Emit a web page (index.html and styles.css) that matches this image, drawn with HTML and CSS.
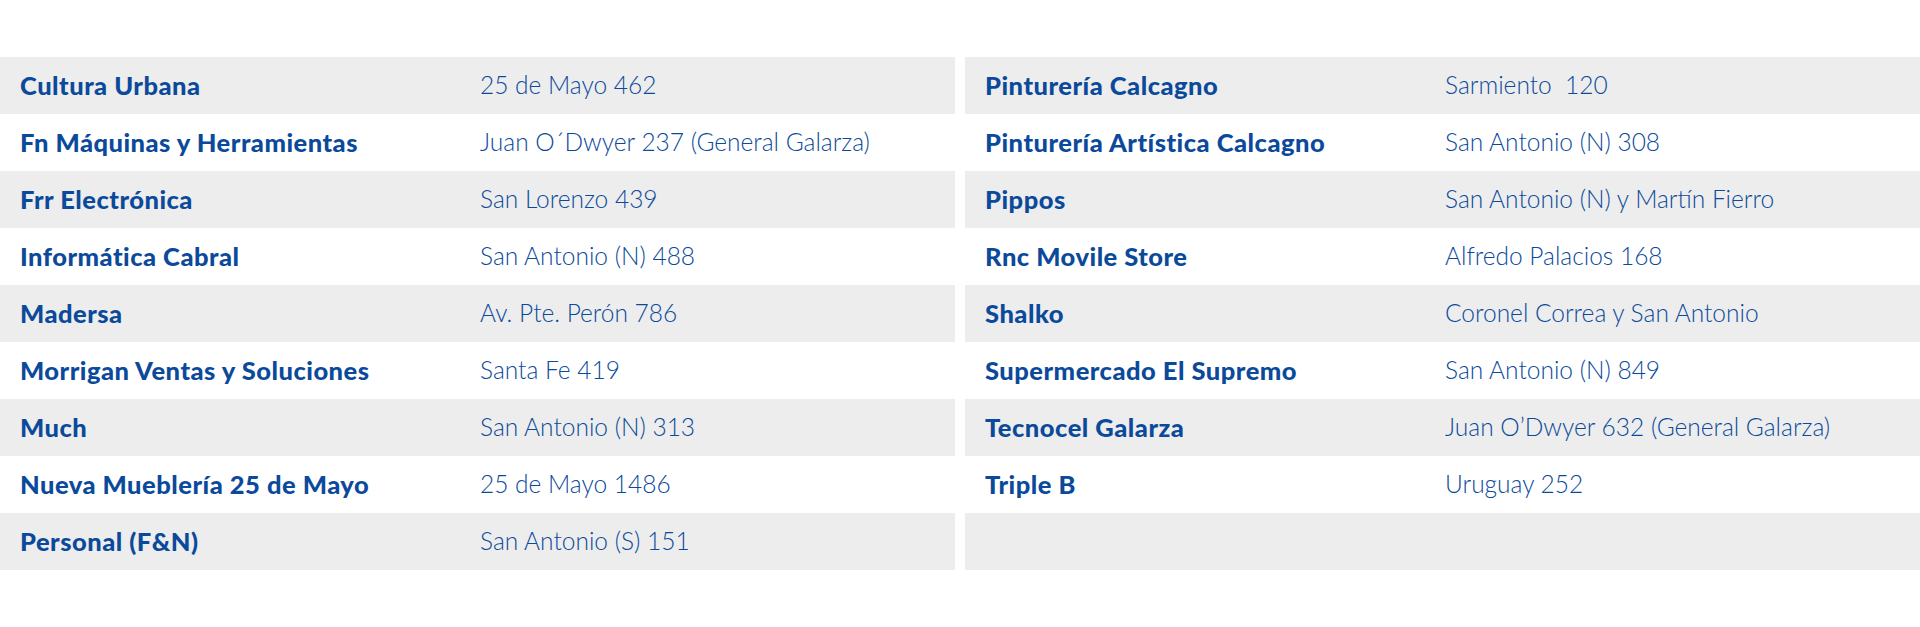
FILE: index.html
```html
<!DOCTYPE html>
<html lang="es">
<head>
<meta charset="utf-8">
<title>Comercios adheridos</title>
<link rel="stylesheet" href="styles.css">
</head>
<body>
<main class="lists">
  <div class="list">
    <div class="row"><span class="name">Cultura Urbana</span><span class="addr">25 de Mayo 462</span></div>
    <div class="row"><span class="name">Fn Máquinas y Herramientas</span><span class="addr">Juan O´Dwyer 237 (General Galarza)</span></div>
    <div class="row"><span class="name">Frr Electrónica</span><span class="addr">San Lorenzo 439</span></div>
    <div class="row"><span class="name">Informática Cabral</span><span class="addr">San Antonio (N) 488</span></div>
    <div class="row"><span class="name">Madersa</span><span class="addr">Av. Pte. Perón 786</span></div>
    <div class="row"><span class="name">Morrigan Ventas y Soluciones</span><span class="addr">Santa Fe 419</span></div>
    <div class="row"><span class="name">Much</span><span class="addr">San Antonio (N) 313</span></div>
    <div class="row"><span class="name">Nueva Mueblería 25 de Mayo</span><span class="addr">25 de Mayo 1486</span></div>
    <div class="row"><span class="name">Personal (F&amp;N)</span><span class="addr">San Antonio (S) 151</span></div>
  </div>
  <div class="list">
    <div class="row"><span class="name">Pinturería Calcagno</span><span class="addr">Sarmiento&nbsp; 120</span></div>
    <div class="row"><span class="name">Pinturería Artística Calcagno</span><span class="addr">San Antonio (N) 308</span></div>
    <div class="row"><span class="name">Pippos</span><span class="addr">San Antonio (N) y Martín Fierro</span></div>
    <div class="row"><span class="name">Rnc Movile Store</span><span class="addr">Alfredo Palacios 168</span></div>
    <div class="row"><span class="name">Shalko</span><span class="addr">Coronel Correa y San Antonio</span></div>
    <div class="row"><span class="name">Supermercado El Supremo</span><span class="addr">San Antonio (N) 849</span></div>
    <div class="row"><span class="name">Tecnocel Galarza</span><span class="addr">Juan O’Dwyer 632 (General Galarza)</span></div>
    <div class="row"><span class="name">Triple B</span><span class="addr">Uruguay 252</span></div>
    <div class="row"><span class="name"></span><span class="addr"></span></div>
  </div>
</main>
</body>
</html>
```

FILE: styles.css
```css
html, body {
  margin: 0;
  padding: 0;
  background: #ffffff;
}

body {
  font-family: Lato, "Open Sans", "Liberation Sans", sans-serif;
  color: #0b4a9b;
}

.lists {
  display: grid;
  grid-template-columns: 955px 955px;
  column-gap: 10px;
  padding-top: 57px;
}

.list {
  display: flex;
  flex-direction: column;
}

.row {
  display: grid;
  grid-template-columns: 460px 1fr;
  height: 57px;
  align-items: center;
  padding-bottom: 2px;
  box-sizing: border-box;
}

.row:nth-child(odd) {
  background: #ededed;
}

.name {
  padding-left: 20px;
  font-weight: 900;
  font-size: 25.5px;
  letter-spacing: 0.5px;
}

.addr {
  padding-left: 20px;
  font-weight: 300;
  font-size: 24.5px;
}
```
